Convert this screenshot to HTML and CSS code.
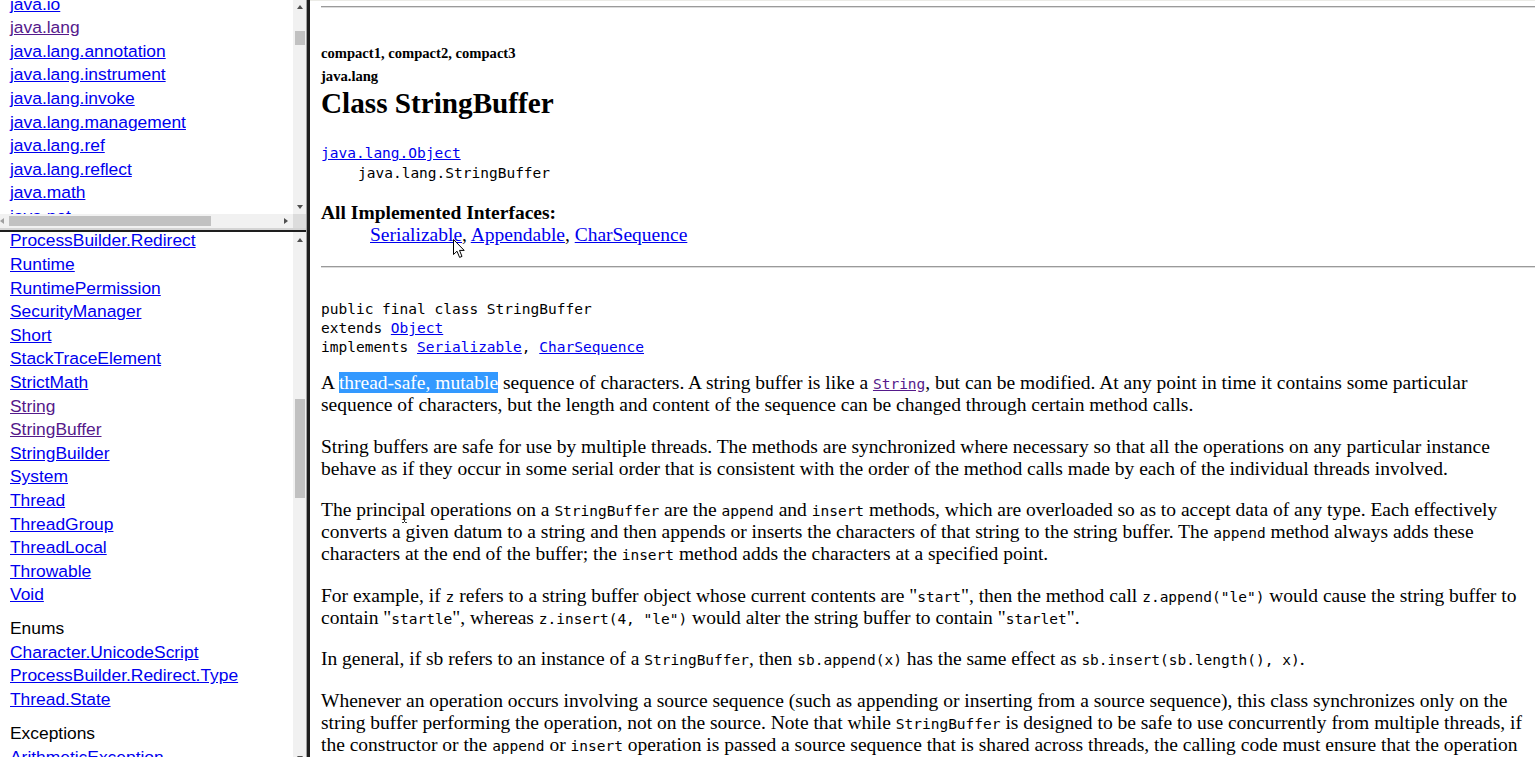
FILE: index.html
```html
<!DOCTYPE html>
<html>
<head>
<meta charset="utf-8">
<title>StringBuffer (Java Platform SE 8)</title>
<link rel="stylesheet" href="styles.css">
</head>
<body>
<div class="nav">
  <div class="frame frame-top">
    <div class="frame-row">
      <div class="pane">
        <ul class="list list-top">
          <li><a href="#">java.io</a></li>
          <li><a href="#" class="visited">java.lang</a></li>
          <li><a href="#">java.lang.annotation</a></li>
          <li><a href="#">java.lang.instrument</a></li>
          <li><a href="#">java.lang.invoke</a></li>
          <li><a href="#">java.lang.management</a></li>
          <li><a href="#">java.lang.ref</a></li>
          <li><a href="#">java.lang.reflect</a></li>
          <li><a href="#">java.math</a></li>
          <li><a href="#">java.net</a></li>
          <li><a href="#">java.nio</a></li>
        </ul>
      </div>
      <div class="vscroll vscroll-top">
        <div class="arrow-box"><span class="tri-up"></span></div>
        <div class="thumb thumb-top"></div>
        <div class="fill"></div>
        <div class="arrow-box"><span class="tri-down"></span></div>
      </div>
    </div>
    <div class="hscroll">
      <div class="htrack">
        <div class="harrow harrow-left"><span class="tri-left"></span></div>
        <div class="hthumb"></div>
        <div class="fill"></div>
        <div class="harrow harrow-right"><span class="tri-right"></span></div>
      </div>
      <div class="corner"></div>
    </div>
  </div>
  <div class="hdivider"></div>
  <div class="frame frame-bottom">
    <div class="pane">
      <ul class="list list-bottom">
        <li><a href="#">ProcessBuilder.Redirect</a></li>
        <li><a href="#">Runtime</a></li>
        <li><a href="#">RuntimePermission</a></li>
        <li><a href="#">SecurityManager</a></li>
        <li><a href="#">Short</a></li>
        <li><a href="#">StackTraceElement</a></li>
        <li><a href="#">StrictMath</a></li>
        <li><a href="#" class="visited">String</a></li>
        <li><a href="#" class="visited">StringBuffer</a></li>
        <li><a href="#">StringBuilder</a></li>
        <li><a href="#">System</a></li>
        <li><a href="#">Thread</a></li>
        <li><a href="#">ThreadGroup</a></li>
        <li><a href="#">ThreadLocal</a></li>
        <li><a href="#">Throwable</a></li>
        <li><a href="#">Void</a></li>
      </ul>
      <h3 class="group">Enums</h3>
      <ul class="list">
        <li><a href="#">Character.UnicodeScript</a></li>
        <li><a href="#">ProcessBuilder.Redirect.Type</a></li>
        <li><a href="#">Thread.State</a></li>
      </ul>
      <h3 class="group">Exceptions</h3>
      <ul class="list">
        <li><a href="#">ArithmeticException</a></li>
        <li><a href="#">ArrayIndexOutOfBoundsException</a></li>
      </ul>
    </div>
    <div class="vscroll vscroll-bottom">
      <div class="arrow-box arrow-box-lower"><span class="tri-up"></span></div>
      <div class="thumb thumb-bottom"></div>
      <div class="fill"></div>
      <div class="arrow-box"><span class="tri-down"></span></div>
    </div>
  </div>
</div>
<div class="vdivider"></div>
<div class="main">
  <hr class="rule rule-top">
  <div class="subtitle">compact1, compact2, compact3</div>
  <div class="subtitle pkg">java.lang</div>
  <h2 class="title">Class StringBuffer</h2>
  <ul class="tree">
    <li><a href="#">java.lang.Object</a></li>
    <li class="tree-child">java.lang.StringBuffer</li>
  </ul>
  <dl class="impl">
    <dt>All Implemented Interfaces:</dt>
    <dd><a href="#">Serializable</a>, <a href="#">Appendable</a>, <a href="#">CharSequence</a></dd>
  </dl>
  <hr class="rule rule-mid">
  <pre class="decl">public final class StringBuffer
extends <a href="#">Object</a>
implements <a href="#">Serializable</a>, <a href="#">CharSequence</a></pre>
  <p class="para para-first">A <span class="sel">thread-safe, mutable</span> sequence of characters. A string buffer is like a <a href="#" class="visited"><code>String</code></a>, but can be modified. At any point in time it contains some particular sequence of characters, but the length and content of the sequence can be changed through certain method calls.</p>
  <p class="para">String buffers are safe for use by multiple threads. The methods are synchronized where necessary so that all the operations on any particular instance behave as if they occur in some serial order that is consistent with the order of the method calls made by each of the individual threads involved.</p>
  <p class="para">The principal operations on a <code>StringBuffer</code> are the <code>append</code> and <code>insert</code> methods, which are overloaded so as to accept data of any type. Each effectively converts a given datum to a string and then appends or inserts the characters of that string to the string buffer. The <code>append</code> method always adds these characters at the end of the buffer; the <code>insert</code> method adds the characters at a specified point.</p>
  <p class="para">For example, if <code>z</code> refers to a string buffer object whose current contents are "<code>start</code>", then the method call <code>z.append("le")</code> would cause the string buffer to contain "<code>startle</code>", whereas <code>z.insert(4, "le")</code> would alter the string buffer to contain "<code>starlet</code>".</p>
  <p class="para">In general, if sb refers to an instance of a <code>StringBuffer</code>, then <code>sb.append(x)</code> has the same effect as <code>sb.insert(sb.length(), x)</code>.</p>
  <p class="para">Whenever an operation occurs involving a source sequence (such as appending or inserting from a source sequence), this class synchronizes only on the string buffer performing the operation, not on the source. Note that while <code>StringBuffer</code> is designed to be safe to use concurrently from multiple threads, if the constructor or the <code>append</code> or <code>insert</code> operation is passed a source sequence that is shared across threads, the calling code must ensure that the operation has a consistent and unchanging view of the source sequence for the duration of the operation.</p>
</div>
<svg class="cursor-arrow" width="13" height="20" viewBox="0 0 13 20"><path d="M0.5 0.5 L0.5 15.5 L4 12.2 L6.6 18.4 L9 17.4 L6.5 11.4 L11.2 11.4 Z" fill="#fff" stroke="#000" stroke-width="1"/></svg>
<svg class="cursor-ibeam" width="7" height="16" viewBox="0 0 7 16"><path d="M1 0.5 H3 M4 0.5 H6 M3.5 1 V15 M1 15.5 H3 M4 15.5 H6" stroke="#333" stroke-width="1" fill="none"/></svg>
</body>
</html>
```
FILE: styles.css
```css
html, body {
  margin: 0;
  padding: 0;
}
body {
  position: relative;
  display: flex;
  height: 757px;
  overflow: hidden;
  background: #fff;
}
a {
  color: #0000ee;
  text-decoration: underline;
}
a.visited {
  color: #551a8b;
}

/* ---------- left navigation ---------- */
.nav {
  flex: none;
  width: 306px;
  display: flex;
  flex-direction: column;
}
.frame {
  display: flex;
  flex: none;
}
.frame-top {
  flex-direction: column;
  height: 228px;
}
.frame-row {
  display: flex;
  height: 214px;
}
.frame-bottom {
  height: 533px;
}
.pane {
  flex: 1;
  overflow: hidden;
  font-family: "Liberation Sans", Arial, sans-serif;
  font-size: 17.4px;
  line-height: 23.6px;
  padding-left: 10px;
  white-space: nowrap;
}
.list {
  list-style: none;
  margin: 0;
  padding: 0;
}
.list-top {
  margin-top: -7.4px;
}
.list-bottom {
  margin-top: -2.6px;
}
.group {
  margin: 10.4px 0 0;
  font-size: 17.4px;
  font-weight: normal;
  line-height: 23.6px;
  color: #000;
}

/* fake scrollbars */
.vscroll {
  flex: none;
  width: 13px;
  background: #f1f1f1;
  display: flex;
  flex-direction: column;
  align-items: center;
}
.arrow-box {
  flex: none;
  height: 14px;
  width: 13px;
  display: flex;
  align-items: center;
  justify-content: center;
}
.arrow-box-lower {
  height: 16px;
}
.fill {
  flex: 1;
}
.thumb {
  flex: none;
  width: 10px;
  background: #c1c1c1;
}
.thumb-top {
  margin-top: 17px;
  height: 14px;
}
.thumb-bottom {
  margin-top: 151px;
  height: 99px;
}
.tri-up, .tri-down, .tri-left, .tri-right {
  display: block;
  width: 0;
  height: 0;
}
.tri-up {
  border-left: 3.5px solid transparent;
  border-right: 3.5px solid transparent;
  border-bottom: 4px solid #505050;
}
.tri-down {
  border-left: 3.5px solid transparent;
  border-right: 3.5px solid transparent;
  border-top: 4px solid #505050;
}
.tri-left {
  border-top: 3.5px solid transparent;
  border-bottom: 3.5px solid transparent;
  border-right: 4px solid #a0a0a0;
}
.tri-right {
  border-top: 3.5px solid transparent;
  border-bottom: 3.5px solid transparent;
  border-left: 4px solid #505050;
}
.hscroll {
  display: flex;
  height: 14px;
}
.htrack {
  flex: 1;
  display: flex;
  align-items: center;
  background: #f1f1f1;
}
.harrow {
  flex: none;
  height: 14px;
  display: flex;
  align-items: center;
}
.harrow-left {
  width: 9px;
}
.harrow-right {
  width: 14px;
  justify-content: center;
}
.hthumb {
  flex: none;
  width: 202px;
  height: 10px;
  background: #c1c1c1;
}
.corner {
  flex: none;
  width: 13px;
  background: #dcdcdc;
}
.hdivider {
  flex: none;
  height: 4px;
  box-sizing: border-box;
  border-top: 2px solid #d4d4d4;
  background: #1e1e1e;
}
.vdivider {
  flex: none;
  width: 4px;
  box-sizing: border-box;
  border-left: 1px solid #a0a0a0;
  background: #1e1e1e;
}

/* ---------- main content ---------- */
.main {
  flex: 1;
  min-width: 0;
  overflow: hidden;
  padding: 0 10px 0 11px;
  border-top: 1px solid #ebebe6;
  font-family: "Liberation Serif", "Times New Roman", serif;
  font-size: 19.5px;
  line-height: 22px;
  color: #000;
}
code, pre, .tree {
  font-family: "DejaVu Sans Mono", Consolas, monospace;
  font-size: 14.5px;
}
code {
  line-height: 1;
}
.rule {
  height: 0;
  border: 0;
  border-top: 1px solid #9a9a9a;
  border-bottom: 1px solid #dcdcdc;
  margin: 0 -10px 0 0;
}
.rule-top {
  margin-top: 5px;
}
.subtitle {
  margin-top: 35px;
  font-weight: bold;
  font-size: 14.6px;
  line-height: 20px;
}
.pkg {
  margin-top: 3px;
}
.title {
  margin: 0;
  font-size: 29.2px;
  line-height: 34px;
  font-weight: bold;
}
.tree {
  list-style: none;
  margin: 23px 0 0;
  padding: 0;
  line-height: 20px;
}
.tree-child {
  padding-left: 37px;
  color: #000;
}
.impl {
  margin: 19px 0 0;
}
.impl dt {
  font-weight: bold;
}
.impl dd {
  margin: 0 0 0 49px;
}
.rule-mid {
  margin-top: 20px;
}
.decl {
  margin: 32px 0 0;
  line-height: 19px;
}
.para {
  margin: 19.5px 0 0;
}
.para-first {
  margin-top: 15px;
}
.sel {
  background: #3399ff;
  color: #fff;
}

/* overlays: mouse pointers */
.cursor-arrow {
  position: absolute;
  left: 453px;
  top: 239px;
}
.cursor-ibeam {
  position: absolute;
  left: 401px;
  top: 507px;
}
```
